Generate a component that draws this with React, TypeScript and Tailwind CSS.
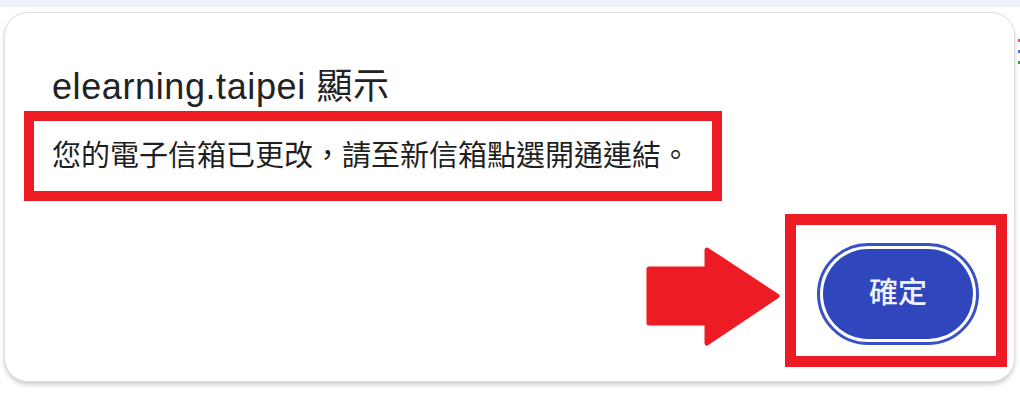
const Arrow = () => (
	<svg width="134" height="100" viewBox="0 0 134 100" className="mt-[33px] shrink-0">
		<polygon
			points="3,22 61,22 61,3 131,49 61,96 61,76 3,76"
			fill="#ed1c24"
			stroke="#ed1c24"
			strokeWidth="5"
			strokeLinejoin="round"
		/>
	</svg>
);

const App = () => {
	return (
		<div
			className="relative h-[406px] w-[1020px] overflow-hidden bg-white"
			style={{ fontFamily: '"Liberation Sans", "Noto Sans CJK TC", sans-serif' }}>
			<div className="h-[7px] bg-[#edf2fa]" />
			<div className="absolute right-0 top-[39px] h-[3px] w-[2px] bg-[#d9534f]" />
			<div className="absolute right-0 top-[50px] h-[3px] w-[2px] bg-[#4a6fd8]" />
			<div className="absolute right-0 top-[61px] h-[3px] w-[2px] bg-[#3f9a4a]" />

			<div className="ml-[4px] mt-[5px] flex h-[370px] w-[1011px] flex-col rounded-[24px] border border-[#dedede] bg-white pt-[56px] shadow-[0_3px_4px_rgba(0,0,0,0.18)]">
				<h1 className="pl-[47px] text-[36px] leading-none tracking-[0.6px] text-[#222]">
					elearning.taipei 顯示
				</h1>

				<div className="ml-[19px] mt-[6px] flex h-[90px] w-[698px] items-center border-[10px] border-[#ed1c24] pl-[18px]">
					<p className="text-[29px] leading-none text-[#1f1f1f]">
						您的電子信箱已更改，請至新信箱點選開通連結。
					</p>
				</div>

				<div className="mt-[13px] flex justify-end gap-[5px] pr-[7px]">
					<Arrow />
					<div className="h-[153px] w-[222px] border-[11px] border-[#ed1c24] pl-[21px] pt-[18px]">
						<button className="flex h-[102px] w-[162px] items-center justify-center rounded-full border-[3px] border-[#3a50c6] bg-white p-[3px]">
							<span className="flex h-full w-full items-center justify-center rounded-full bg-[#2f46bd] text-[29px] font-medium text-[#f2f2ff]">
								確定
							</span>
						</button>
					</div>
				</div>
			</div>
		</div>
	);
};

export default App;
